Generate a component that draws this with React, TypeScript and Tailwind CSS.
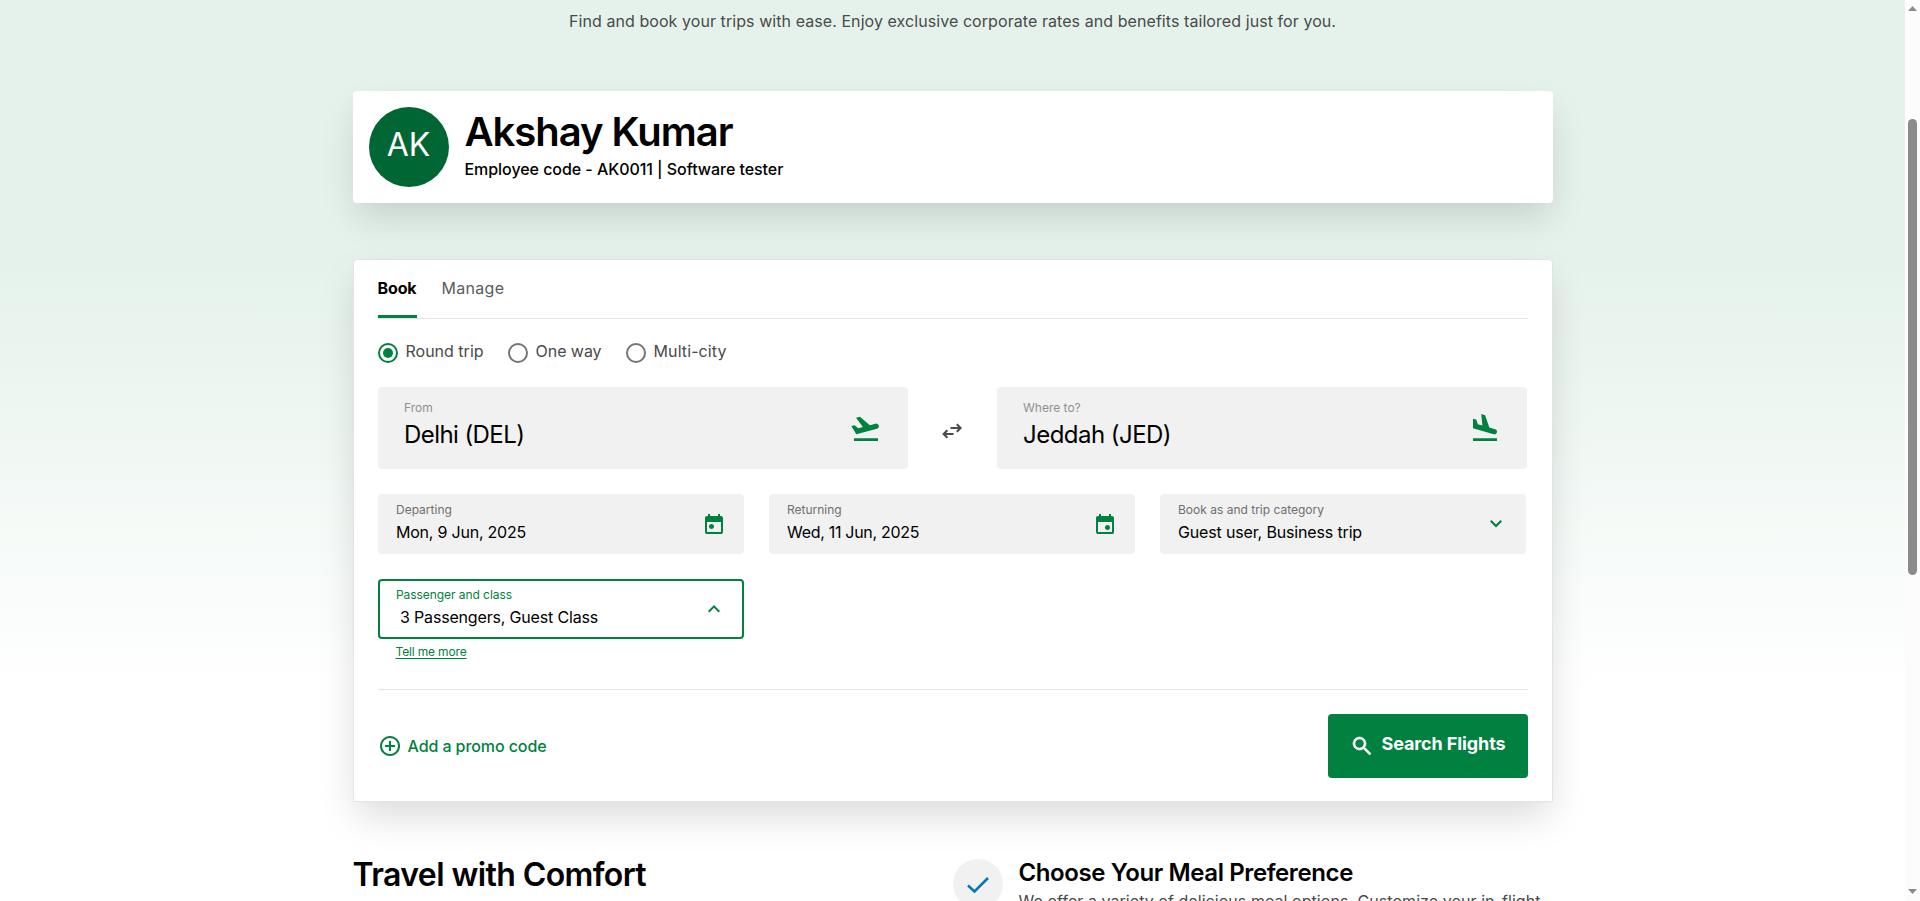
import React from "react";

type SymbolProps = { d: string; className: string };

/* Material Symbols glyph on the 960-unit grid */
function Symbol({ d, className }: SymbolProps) {
  return (
    <svg viewBox="0 -960 960 960" className={"shrink-0 fill-current " + className} aria-hidden="true">
      <path d={d} />
    </svg>
  );
}

const TAKEOFF =
  "M120-120v-80h720v80H120Zm70-200L40-570l96-26 112 94 140-37-207-276 116-31 299 251 170-46q32-9 60.5 7.5T864-585q9 32-7.5 60.5T808-487L190-320Z";
const LANDING =
  "M120-120v-80h720v80H120Zm622-202L120-499v-291l96 27 48 139 138 39-35-343 115 34 128 369 172 49q25 8 41.5 29t16.5 48q0 35-28.5 61.5T742-322Z";
const CALENDAR_BODY =
  "M200-80q-33 0-56.500-23.500T120-160v-560q0-33 23.500-56.500T200-800h40v-80h80v80h320v-80h80v80h40q33 0 56.500 23.500T840-720v560q0 33-23.500 56.500T760-80H200Zm0-80h560v-400H200v400Z";
const DOT_LEFT = "M380-280q-42 0-71-29t-29-71q0-42 29-71t71-29q42 0 71 29t29 71q0 42-29 71t-71 29Z";
const DOT_RIGHT = "M580-240q-42 0-71-29t-29-71q0-42 29-71t71-29q42 0 71 29t29 71q0 42-29 71t-71 29Z";
const EXPAND_MORE = "M480-344 240-584l56-56 184 184 184-184 56 56-240 240Z";
const EXPAND_LESS = "M480-528 296-344l-56-56 240-240 240 240-56 56-184-184Z";
const ADD_CIRCLE =
  "M440-280h80v-160h160v-80H520v-160h-80v160H280v80h160v160Zm40 200q-83 0-156-31.500T197-197q-54-54-85.500-127T80-480q0-83 31.500-156T197-763q54-54 127-85.500T480-880q83 0 156 31.500T763-763q54 54 85.500 127T880-480q0 83-31.500 156T763-197q-54 54-127 85.500T480-80Zm0-80q134 0 227-93t93-227q0-134-93-227t-227-93q-134 0-227 93t-93 227q0 134 93 227t227 93Z";
const SEARCH =
  "M784-120 532-372q-30 24-69 38t-83 14q-109 0-184.500-75.500T120-580q0-109 75.500-184.500T380-840q109 0 184.500 75.500T640-580q0 44-14 83t-38 69l252 252-56 56ZM380-400q75 0 127.500-52.500T560-580q0-75-52.500-127.500T380-760q-75 0-127.500 52.500T200-580q0 75 52.500 127.500T380-400Z";

function SwapIcon() {
  return (
    <svg viewBox="0 0 24 24" className="size-6 shrink-0 fill-none stroke-[#4a4a4a] stroke-2" aria-hidden="true">
      <path d="M10.500 9H20.500M16.800 5.200L20.600 9L16.800 12.800M13.500 15H4M7.400 11.200L3.600 15L7.400 18.800" />
    </svg>
  );
}

function Radio({ label, checked, tracking }: { label: string; checked?: boolean; tracking: string }) {
  return (
    <label className="flex items-start gap-2">
      <span
        className={
          "mt-1 flex size-5 items-center justify-center rounded-full border-2 " +
          (checked ? "border-[#008140]" : "border-[#757575]")
        }
      >
        {checked && <span className="size-2.5 rounded-full bg-[#008140]" />}
      </span>
      <span className={"whitespace-nowrap leading-6 text-[#4a4a4a] " + tracking}>{label}</span>
    </label>
  );
}

function AirportField(p: { label: string; value: string; icon: string; tracking: string }) {
  return (
    <div className="flex h-[82px] w-[530px] items-start justify-between rounded bg-[#f1f1f1] pt-[13px] pr-[26px] pl-[26.5px]">
      <div>
        <div className="text-xs leading-4 text-[#909090]">{p.label}</div>
        <div className={"mt-[3px] text-2xl leading-8 text-black " + p.tracking}>{p.value}</div>
      </div>
      <Symbol d={p.icon} className="mt-[13px] size-8 text-[#008140]" />
    </div>
  );
}

function SmallField(p: { label: string; value: string; tracking: string; icon: React.ReactNode }) {
  return (
    <div className="flex h-[60px] w-[366px] items-center justify-between rounded bg-[#f1f1f1] px-[18px]">
      <div className="self-start pt-2 pl-[0.5px]">
        <div className="text-xs leading-4 text-[#6f6f6f]">{p.label}</div>
        <div className={"mt-0.5 leading-6 text-black " + p.tracking}>{p.value}</div>
      </div>
      {p.icon}
    </div>
  );
}

export default function App() {
  return (
    <div className="flex h-[901px] w-full overflow-hidden bg-white font-['Inter',sans-serif] text-base text-black">
      <main className="flex min-w-0 flex-1 flex-col items-center bg-[linear-gradient(180deg,#e5f2eb_0px,#e5f2eb_260px,#ffffff_690px)]">
        <p className="mt-[9px] leading-6 tracking-[0.069px] whitespace-nowrap text-[#4a4a4a]">
          Find and book your trips with ease. Enjoy exclusive corporate rates and benefits tailored just for you.
        </p>

        <section className="mt-[58px] flex h-[112px] w-[1200px] shrink-0 items-start gap-4 rounded bg-white p-4 shadow-[0_17px_36px_-4px_rgba(0,0,0,0.15)]">
          <div className="flex size-20 items-center justify-center rounded-full bg-[#006633] pb-[5px] text-[32px] text-white">
            AK
          </div>
          <div>
            <h1 className="mt-px text-[40px] leading-[48px] font-semibold tracking-[-1.03px]">Akshay Kumar</h1>
            <p className="mt-px leading-6 font-medium tracking-[-0.05px]">
              Employee code - AK0011 | Software tester
            </p>
          </div>
        </section>

        <section className="mt-14 h-[543px] w-[1200px] shrink-0 rounded-t border border-[#e3e3e3] bg-white px-6 pt-4 shadow-[0_17px_36px_-4px_rgba(0,0,0,0.15)]">
          <nav className="flex h-[43px] gap-[25px] border-b border-[#e3e3e3]">
            <span className="h-[42px] border-b-[3px] border-[#008140] leading-6 font-bold tracking-[-0.12px]">Book</span>
            <span className="leading-6 tracking-[0.3px] text-[#5c5c5c]">Manage</span>
          </nav>

          <div className="mt-5 flex gap-6">
            <Radio label="Round trip" checked tracking="tracking-normal" />
            <Radio label="One way" tracking="tracking-[-0.05px]" />
            <Radio label="Multi-city" tracking="tracking-[0.095px]" />
          </div>

          <div className="mt-6 flex items-center">
            <AirportField label="From" value="Delhi (DEL)" icon={TAKEOFF} tracking="tracking-[-0.58px]" />
            <div className="flex w-[89px] justify-center pt-1.5">
              <SwapIcon />
            </div>
            <AirportField label="Where to?" value="Jeddah (JED)" icon={LANDING} tracking="tracking-[-0.53px]" />
          </div>

          <div className="mt-[25px] grid grid-cols-[repeat(3,366px)] gap-[25px]">
            <SmallField
              label="Departing"
              value="Mon, 9 Jun, 2025"
              tracking="tracking-[-0.22px]"
              icon={<Symbol d={CALENDAR_BODY + DOT_LEFT} className="size-6 text-[#008140]" />}
            />
            <SmallField
              label="Returning"
              value="Wed, 11 Jun, 2025"
              tracking="tracking-[-0.3px]"
              icon={<Symbol d={CALENDAR_BODY + DOT_RIGHT} className="size-6 text-[#008140]" />}
            />
            <SmallField
              label="Book as and trip category"
              value="Guest user, Business trip"
              tracking="tracking-[-0.155px]"
              icon={<Symbol d={EXPAND_MORE} className="size-6 text-[#008140]" />}
            />
            <div>
              <div className="flex h-[60px] items-center justify-between rounded border-2 border-[#008140] bg-white px-4">
                <div className="self-start pt-1.5 pl-[0.5px]">
                  <div className="text-xs leading-4 tracking-[-0.06px] text-[#008140]">Passenger and class</div>
                  <div className="mt-0.5 pl-1 leading-6 tracking-[-0.173px]">3 Passengers, Guest Class</div>
                </div>
                <Symbol d={EXPAND_LESS} className="size-6 text-[#008140]" />
              </div>
              <a className="mt-[5px] ml-[18px] block w-fit text-xs leading-4 tracking-[-0.158px] text-[#008140] underline underline-offset-2">
                Tell me more
              </a>
            </div>
          </div>

          <div className="mt-[29px] flex items-center justify-between border-t border-[#e3e3e3] pt-6">
            <button className="flex items-center gap-1.5 text-[#008140]">
              <Symbol d={ADD_CIRCLE} className="size-6" />
              <span className="leading-6 font-medium tracking-[-0.086px]">Add a promo code</span>
            </button>
            <button className="flex h-16 w-[200px] items-center gap-2 rounded bg-[#008140] pl-[22px] text-white">
              <Symbol d={SEARCH} className="size-6 stroke-current stroke-[24px]" />
              <span className="pb-1 text-lg leading-6 font-bold tracking-[-0.11px] whitespace-nowrap">Search Flights</span>
            </button>
          </div>
        </section>

        <section className="mt-[53px] flex w-[1200px] shrink-0 items-start">
          <h2 className="w-[600px] text-[32px] leading-10 font-semibold tracking-[-0.6px]">Travel with Comfort</h2>
          <div className="flex gap-4">
            <span className="mt-1 flex size-[50px] shrink-0 items-center justify-center rounded-full bg-[#f1f1f1]">
              <svg viewBox="0 0 24 18" className="mt-0.5 ml-px h-[18px] w-6 fill-none stroke-[#0076b8] stroke-[2.5]" aria-hidden="true">
                <path d="M2 9.500L8.500 15.500L22 2" />
              </svg>
            </span>
            <div>
              <h3 className="mt-0.5 text-2xl leading-8 font-semibold tracking-[-0.39px]">Choose Your Meal Preference</h3>
              <p className="leading-6 tracking-[0.051px] whitespace-nowrap text-[#4a4a4a]">
                We offer a variety of delicious meal options. Customize your in-flight
              </p>
            </div>
          </div>
        </section>
      </main>

      <aside className="flex w-[15px] shrink-0 flex-col items-center bg-[#fcfcfc]">
        <svg viewBox="0 0 9 5" className="mt-1.5 h-[5px] w-[9px] fill-[#8b8b8b]" aria-hidden="true">
          <path d="M0 5L4.500 0L9 5Z" />
        </svg>
        <div className="mt-[108px] h-[456px] w-[9px] rounded-full bg-[#8b8b8b]" />
        <svg viewBox="0 0 9 5" className="mt-auto mb-[7px] h-[5px] w-[9px] fill-[#8b8b8b]" aria-hidden="true">
          <path d="M0 0L4.500 5L9 0Z" />
        </svg>
      </aside>
    </div>
  );
}
